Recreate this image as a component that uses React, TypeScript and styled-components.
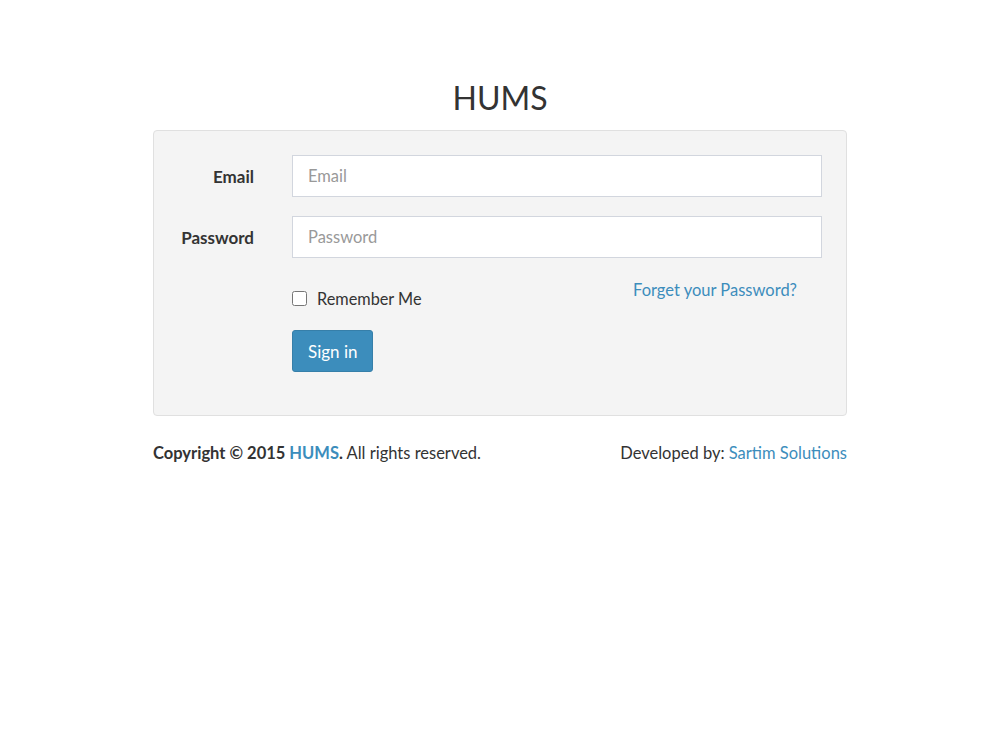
import React from "react";
import styled, { createGlobalStyle } from "styled-components";

const Global = createGlobalStyle`
  body {
    margin: 0;
    background: #fff;
    font-family: "Lato", "Noto Sans", sans-serif;
    color: #333;
  }
`;

const Page = styled.div`
  width: 694px;
  margin: 0 auto;
  padding-top: 78px;
`;

const Title = styled.h1`
  margin: 0 0 12px;
  text-align: center;
  font-size: 32px;
  font-weight: 400;
  line-height: 40px;
  color: #333;
`;

const Box = styled.form`
  background: #f4f4f4;
  border: 1px solid #e0e0e0;
  border-radius: 4px;
  padding: 24px 24px 43px;
  display: grid;
  grid-template-columns: 76px 1fr;
  column-gap: 38px;
  row-gap: 19px;
  align-items: center;
`;

const Label = styled.label`
  text-align: right;
  font-weight: 700;
  font-size: 17px;
`;

const Input = styled.input`
  height: 42px;
  box-sizing: border-box;
  border: 1px solid #d2d6de;
  padding: 0 15px;
  font-family: inherit;
  font-size: 16.5px;
  color: #555;
  background: #fff;
  &::placeholder {
    color: #999;
  }
`;

const Options = styled.div`
  grid-column: 2;
  display: flex;
  justify-content: space-between;
  align-items: flex-start;
  padding: 3px 25px 0 0;
`;

const Check = styled.label`
  display: flex;
  align-items: center;
  gap: 10px;
  font-size: 16.3px;
  margin-top: 9px;
  input {
    margin: 0;
    width: 15px;
    height: 15px;
  }
`;

const Link = styled.a`
  color: #3c8dbc;
  text-decoration: none;
`;

const ForgotLink = styled(Link)`
  font-size: 16.5px;
`;

const ButtonCell = styled.div`
  grid-column: 2;
  margin-top: 3px;
`;

const Button = styled.button`
  height: 42px;
  padding: 0 15px;
  background: #3c8dbc;
  border: 1px solid #367fa9;
  border-radius: 3px;
  color: #fff;
  font-family: inherit;
  font-size: 17px;
`;

const Footer = styled.footer`
  display: flex;
  justify-content: space-between;
  margin-top: 27px;
  font-size: 16.5px;
`;

const Strong = styled.strong`
  font-weight: 700;
`;

export default function App() {
  return (
    <>
      <Global />
      <Page>
        <Title>HUMS</Title>
        <Box onSubmit={(e) => e.preventDefault()}>
          <Label>Email</Label>
          <Input type="email" placeholder="Email" />
          <Label>Password</Label>
          <Input type="password" placeholder="Password" />
          <Options>
            <Check>
              <input type="checkbox" />
              Remember Me
            </Check>
            <ForgotLink href="#">Forget your Password?</ForgotLink>
          </Options>
          <ButtonCell>
            <Button type="submit">Sign in</Button>
          </ButtonCell>
        </Box>
        <Footer>
          <span>
            <Strong>
              Copyright © 2015 <Link href="#">HUMS</Link>.
            </Strong>{" "}
            All rights reserved.
          </span>
          <span>
            Developed by: <Link href="#">Sartim Solutions</Link>
          </span>
        </Footer>
      </Page>
    </>
  );
}
